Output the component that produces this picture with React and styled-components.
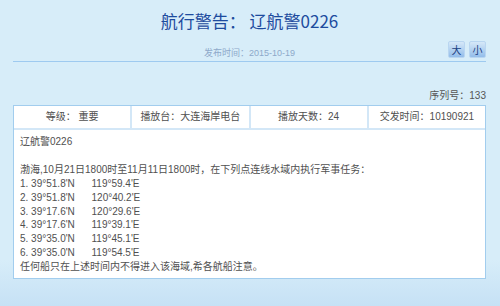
import styled, { createGlobalStyle } from 'styled-components';

const GlobalStyle = createGlobalStyle`
  html, body {
    margin: 0;
    padding: 0;
  }
  body {
    background: linear-gradient(to bottom, #d7edf9 0%, #d7edf9 85%, #c6e1f5 100%);
    font-family: "Liberation Sans", "Noto Sans CJK SC", sans-serif;
  }
`;

const Page = styled.div`
  width: 500px;
  height: 306px;
  box-sizing: border-box;
  padding: 11px 14px 0 13px;
`;

const Title = styled.h1`
  margin: 0;
  text-align: center;
  font-size: 17px;
  line-height: 20px;
  font-weight: normal;
  color: #1d4b9e;
  font-family: "Noto Sans CJK SC", "Liberation Sans", sans-serif;
`;

const InfoRow = styled.div`
  display: grid;
  grid-template-columns: 1fr auto 1fr;
  align-items: center;
  height: 20px;
  margin-top: 10px;
  border-bottom: 1px solid #9ecaf0;
`;

const PubDate = styled.span`
  grid-column: 2;
  font-size: 9px;
  color: #8ea9ca;
`;

const SizeButtons = styled.div`
  grid-column: 3;
  justify-self: end;
  display: flex;
  gap: 4px;
  margin-bottom: 5px;
`;

const SizeButton = styled.button`
  width: 17px;
  height: 17px;
  padding: 0;
  border: 1px solid #b9d6f1;
  border-radius: 2px;
  background: linear-gradient(to bottom, #d6e8f8, #93bdea);
  color: #1a3f82;
  font-size: 10px;
  line-height: 15px;
  font-family: "Noto Sans CJK SC", sans-serif;
  cursor: pointer;
`;

const Serial = styled.div`
  text-align: right;
  font-size: 10px;
  line-height: 14px;
  color: #555;
  margin-top: 27px;
`;

const Table = styled.div`
  margin-top: 2px;
  border: 1px solid #a2cdee;
  background: #fff;
`;

const HeadRow = styled.div`
  display: grid;
  grid-template-columns: repeat(4, 1fr);
  gap: 2px;
  background: #d3e7f7;
  border-bottom: 2px solid #d3e7f7;
`;

const HeadCell = styled.div`
  background: #fff;
  height: 22px;
  line-height: 22px;
  text-align: center;
  font-size: 10px;
  color: #505050;
`;

const Body = styled.div`
  padding: 5px 6px 4px;
  font-size: 10px;
  line-height: 13.9px;
  color: #505050;
  white-space: pre-wrap;
`;

const Line = styled.div`
  min-height: 13.9px;
`;

const heads = ['等级： 重要', '播放台：大连海岸电台', '播放天数：24', '交发时间：10190921'];

const lines = [
  '辽航警0226',
  '',
  '渤海,10月21日1800时至11月11日1800时，在下列点连线水域内执行军事任务：',
  "1. 39°51.8'N      119°59.4'E",
  "2. 39°51.8'N      120°40.2'E",
  "3. 39°17.6'N      120°29.6'E",
  "4. 39°17.6'N      119°39.1'E",
  "5. 39°35.0'N      119°45.1'E",
  "6. 39°35.0'N      119°54.5'E",
  '任何船只在上述时间内不得进入该海域,希各航船注意。',
];

export default function App() {
  return (
    <>
      <GlobalStyle />
      <Page>
        <Title>航行警告： 辽航警0226</Title>
        <InfoRow>
          <PubDate>发布时间：2015-10-19</PubDate>
          <SizeButtons>
            <SizeButton>大</SizeButton>
            <SizeButton>小</SizeButton>
          </SizeButtons>
        </InfoRow>
        <Serial>序列号：133</Serial>
        <Table>
          <HeadRow>
            {heads.map((h) => (
              <HeadCell key={h}>{h}</HeadCell>
            ))}
          </HeadRow>
          <Body>
            {lines.map((l, i) => (
              <Line key={i}>{l}</Line>
            ))}
          </Body>
        </Table>
      </Page>
    </>
  );
}
